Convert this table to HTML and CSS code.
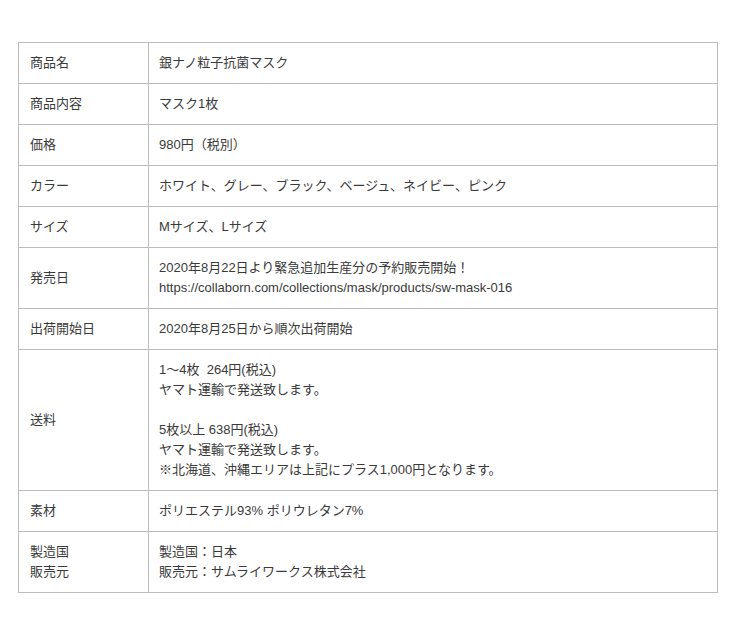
FILE: index.html
```html
<!DOCTYPE html>
<html lang="ja">
<head>
<meta charset="utf-8">
<link rel="stylesheet" href="styles.css">
</head>
<body>
<table class="spec">
<tbody>
<tr><th>商品名</th><td>銀ナノ粒子抗菌マスク</td></tr>
<tr><th>商品内容</th><td>マスク1枚</td></tr>
<tr><th>価格</th><td>980円（税別）</td></tr>
<tr><th>カラー</th><td>ホワイト、グレー、ブラック、ベージュ、ネイビー、ピンク</td></tr>
<tr><th>サイズ</th><td>Mサイズ、Lサイズ</td></tr>
<tr><th>発売日</th><td>2020年8月22日より緊急追加生産分の予約販売開始！<br>https://collaborn.com/collections/mask/products/sw-mask-016</td></tr>
<tr><th>出荷開始日</th><td>2020年8月25日から順次出荷開始</td></tr>
<tr><th>送料</th><td>1〜4枚&nbsp;&nbsp;264円(税込)<br>ヤマト運輸で発送致します。<br><br>5枚以上 638円(税込)<br>ヤマト運輸で発送致します。<br>※北海道、沖縄エリアは上記にプラス1,000円となります。</td></tr>
<tr><th>素材</th><td>ポリエステル93% ポリウレタン7%</td></tr>
<tr><th>製造国<br>販売元</th><td>製造国：日本<br>販売元：サムライワークス株式会社</td></tr>
</tbody>
</table>
</body>
</html>
```
FILE: styles.css
```css
html, body {
  margin: 0;
  padding: 0;
  background: #fff;
}
body {
  padding: 42px 0 0 18px;
  font-family: "Liberation Sans", "Noto Sans CJK JP", sans-serif;
  font-size: 13px;
  line-height: 20px;
  color: #3a3a3a;
}
.spec {
  border-collapse: collapse;
  width: 700px;
  table-layout: fixed;
}
.spec th, .spec td {
  border: 1px solid #bbb;
  padding: 10px 11px;
  text-align: left;
  vertical-align: middle;
  font-weight: normal;
}
.spec th {
  width: 107px;
}
.spec td {
  padding-left: 10px;
}
```
